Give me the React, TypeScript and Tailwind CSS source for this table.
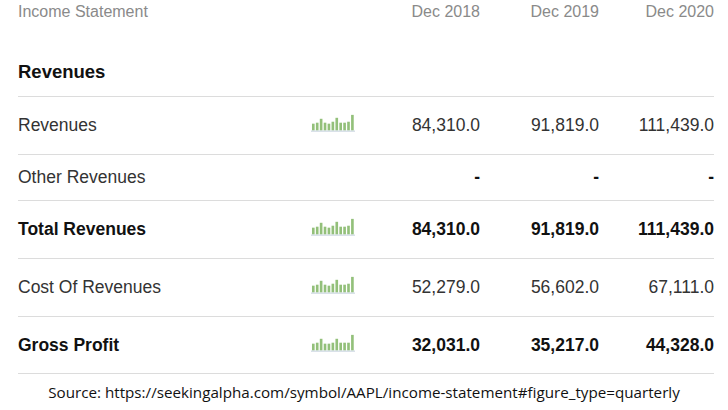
const bars = {
  a: [7, 8, 12, 8, 7, 9, 13, 8, 8, 9, 16],
  b: [7, 8, 12, 7, 7, 8, 12, 8, 8, 8, 16],
};

type Row = {
  label: string;
  values: string[];
  bold?: boolean;
  chart?: number[];
  height: string;
};

const rows: Row[] = [
  { label: 'Revenues', values: ['84,310.0', '91,819.0', '111,439.0'], chart: bars.a, height: 'h-[58px]' },
  { label: 'Other Revenues', values: ['-', '-', '-'], height: 'h-[46px]' },
  { label: 'Total Revenues', values: ['84,310.0', '91,819.0', '111,439.0'], bold: true, chart: bars.a, height: 'h-[58px]' },
  { label: 'Cost Of Revenues', values: ['52,279.0', '56,602.0', '67,111.0'], chart: bars.a, height: 'h-[58px]' },
  { label: 'Gross Profit', values: ['32,031.0', '35,217.0', '44,328.0'], bold: true, chart: bars.b, height: 'h-[57px]' },
];

const Sparkline = ({ data }: { data: number[] }) => (
  <svg width="45" height="19" viewBox="0 0 45 19" className="mb-[6px]">
    {data.map((h, i) => (
      <rect key={i} x={1 + i * 4} y={17.7 - h} width="2.7" height={h} fill="#93c07a" />
    ))}
    <rect x="0" y="17.7" width="45" height="1.3" fill="#cfd9e4" />
  </svg>
);

const cols = 'grid grid-cols-[293px_44px_125px_119px_115px] items-center';

export default function App() {
  return (
    <div className="w-[728px] h-[410px] bg-white pl-[18px] pr-[14px] font-['Liberation_Sans',Arial,sans-serif]">
      <div className={`${cols} h-6 text-[16px] text-[#8a8a8a]`}>
        <span>Income Statement</span>
        <span />
        <span className="text-right">Dec 2018</span>
        <span className="text-right">Dec 2019</span>
        <span className="text-right">Dec 2020</span>
      </div>
      <div className="h-[73px] flex items-end pb-[13px] border-b border-[#dcdcdc]">
        <h3 className="text-[18.5px] leading-[22px] font-bold text-[#111]">Revenues</h3>
      </div>
      {rows.map(({ label, values, bold, chart, height }) => (
        <div
          key={label}
          className={`${cols} ${height} border-b border-[#dcdcdc] text-[17.5px] ${
            bold ? 'font-bold text-[#111]' : 'text-[#333]'
          }`}
        >
          <span>{label}</span>
          <span className="flex">{chart && <Sparkline data={chart} />}</span>
          {values.map((v, i) => (
            <span key={i} className={`text-right ${v === '-' ? 'font-bold text-[#111]' : ''}`}>
              {v}
            </span>
          ))}
        </div>
      ))}
      <p className="h-[36px] -ml-[18px] -mr-[14px] flex items-center justify-center text-[15.2px] text-[#111] font-['Open_Sans',sans-serif]">
        Source: https://seekingalpha.com/symbol/AAPL/income-statement#figure_type=quarterly
      </p>
    </div>
  );
}
